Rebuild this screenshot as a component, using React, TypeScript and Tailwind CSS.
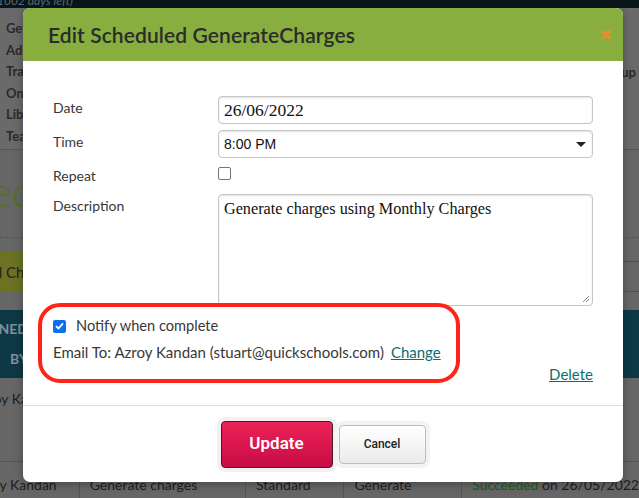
import React from 'react';

const menuLeft = ['Getting Started', 'Admin', 'Transcripts', 'Online Forms', 'Library', 'Teachers'];

function Background() {
    return (
        <div className="w-[639px] h-[498px] bg-[#666666] flex flex-col font-['Lato',sans-serif]">
            {/* top bar */}
            <div className="h-[8px] bg-[#08161c] overflow-hidden">
                <div className="text-[12px] leading-[12px] text-[#5d6c72] italic -translate-y-[5px] -ml-[6px]">(1002 days left)</div>
            </div>

            {/* menu */}
            <div className="h-[142px] bg-[#6a6a6a] border-b border-[#555] flex justify-between pt-[10px]">
                <div className="flex flex-col pl-[6px]">
                    {menuLeft.map((m) => (
                        <div key={m} className="h-[21.6px] leading-[21.6px] text-[13px] font-bold text-[#2a2a2a] whitespace-nowrap">
                            {m}
                        </div>
                    ))}
                </div>
                <div className="flex flex-col pr-[3px] pt-[43px]">
                    <div className="h-[22px] leading-[22px] text-[13px] font-bold text-[#2a2a2a]">Setup</div>
                </div>
            </div>

            {/* logo strip */}
            <div className="h-[88px] border-b border-dashed border-[#555] overflow-hidden">
                <div className="-ml-[10px] mt-[16px] text-[42px] leading-[50px] font-light text-[#55711f]">ed</div>
            </div>

            {/* buttons / header lines */}
            <div className="h-[72px] flex justify-between">
                <div className="mt-[14px] h-[40px] w-[100px] -ml-[20px] pl-[5px] bg-[#6b7322] flex items-center text-[15px] text-[#222] whitespace-nowrap overflow-hidden">
                    All Charges
                </div>
                <div className="w-[16px] mt-[23px] h-[31px] border-y border-[#505050]" />
            </div>

            {/* table header */}
            <div className="h-[68px] bg-[#0d3946] flex items-center">
                <div className="-ml-[52px] w-[80px] text-right text-[14px] font-bold leading-[30px] text-[#7f9199]">
                    ASSIGNED
                    <br />
                    BY
                </div>
            </div>

            {/* row */}
            <div className="h-[84px] border-b border-[#555] pt-[10px]">
                <div className="-ml-[27px] text-[14px] text-[#1d1d1d]">Azroy Kandan</div>
            </div>

            {/* last row */}
            <div className="flex-1 flex text-[14px] text-[#1d1d1d] whitespace-nowrap">
                <div className="w-[82px] border-r border-[#555] overflow-hidden flex justify-end pt-[12px]">
                    <span className="pr-[22px]">Azroy Kandan</span>
                </div>
                <div className="w-[171px] border-r border-[#555] pl-[10px] pt-[12px]">Generate charges</div>
                <div className="w-[101px] border-r border-[#555] pl-[10px] pt-[12px]">Standard</div>
                <div className="w-[121px] border-r border-[#555] pl-[10px] pt-[12px]">Generate</div>
                <div className="pl-[10px] pt-[12px]">
                    <span className="text-[#1c5a1c]">Succeeded</span> on 26/05/2022
                </div>
            </div>
        </div>
    );
}

function Row({ label, children, className }: { label: string; children: React.ReactNode; className?: string }) {
    return (
        <div className={'flex items-start leading-[20px] ' + (className ?? '')}>
            <div className="w-[165px] shrink-0 pt-[2px] text-[14px] text-[#383838]">{label}</div>
            <div className="flex-1">{children}</div>
        </div>
    );
}

export default function App() {
    return (
        <div className="relative w-[639px] h-[498px] overflow-hidden">
            <Background />

            {/* modal */}
            <div className="absolute left-[23px] top-[8px] w-[600px] h-[474px] bg-white rounded-[7px] flex flex-col overflow-hidden font-['Lato',sans-serif] shadow-[0_2px_10px_rgba(0,0,0,0.3)]">
                <div className="h-[53px] shrink-0 bg-[#87ae3e] flex items-center justify-between pl-[25px] pr-[12px]">
                    <h2 className="text-[21px] font-semibold text-[#2b2b2b] tracking-[0.1px]">Edit Scheduled GenerateCharges</h2>
                    <svg width="10" height="10" viewBox="0 0 10 10" className="mt-[1px]">
                        <path d="M1.5 1.5 L8.5 8.5 M8.5 1.5 L1.5 8.5" stroke="#f28b2b" strokeWidth="2.6" strokeLinecap="round" />
                    </svg>
                </div>

                <div className="flex-1 relative px-[30px] pt-[35px]">
                    <Row label="Date">
                        <div className="h-[28px] border border-[#c6c6c6] rounded-[4px] shadow-[inset_0_1px_2px_rgba(0,0,0,0.12)] flex items-center pl-[5px] font-['Liberation_Serif',serif] text-[17.5px] text-[#111]">
                            26/06/2022
                        </div>
                    </Row>

                    <Row label="Time" className="mt-[6px]">
                        <div className="h-[28px] border border-[#c6c6c6] rounded-[4px] shadow-[inset_0_1px_2px_rgba(0,0,0,0.12)] flex items-center justify-between pl-[5px] pr-[6px] font-['Liberation_Sans',sans-serif] text-[14px] text-[#111]">
                            <span>8:00 PM</span>
                            <svg width="10" height="5" viewBox="0 0 10 5">
                                <path d="M0 0 H10 L5 5 Z" fill="#222" />
                            </svg>
                        </div>
                    </Row>

                    <Row label="Repeat" className="mt-[6px]">
                        <div className="pt-[3px]">
                            <div className="w-[13px] h-[13px] border border-[#767676] rounded-[2px] bg-white" />
                        </div>
                    </Row>

                    <Row label="Description" className="mt-[8px]">
                        <div className="h-[112px] border border-[#c6c6c6] rounded-[4px] shadow-[inset_0_1px_2px_rgba(0,0,0,0.12)] relative pl-[5px] pt-[4px] font-['Liberation_Serif',serif] text-[16.2px] text-[#111]">
                            Generate charges using Monthly Charges
                            <svg className="absolute right-[2px] bottom-[2px]" width="8" height="8" viewBox="0 0 8 8">
                                <path d="M7 1 L1 7 M7 4 L4 7" stroke="#888" strokeWidth="1" />
                            </svg>
                        </div>
                    </Row>

                    <div className="mt-[10px] flex items-center h-[20px] text-[14.6px] text-[#383838]">
                        <div className="w-[13px] h-[13px] rounded-[2px] bg-[#0d6ef4] flex items-center justify-center">
                            <svg width="9" height="8" viewBox="0 0 9 8">
                                <path d="M1 4.2 L3.4 6.5 L8 1.3" stroke="white" strokeWidth="1.8" fill="none" />
                            </svg>
                        </div>
                        <span className="ml-[10px]">Notify when complete</span>
                    </div>

                    <div className="mt-[6px] h-[20px] leading-[20px] text-[15px] text-[#383838] whitespace-nowrap">
                        Email To: Azroy Kandan (stuart@quickschools.com)
                        <a className="ml-[7px] text-[#0e6e6c] underline">Change</a>
                    </div>

                    <div className="mt-[2px] h-[20px] leading-[20px] text-[15px] text-right">
                        <a className="text-[#0e6e6c] underline">Delete</a>
                    </div>

                    {/* highlight annotation */}
                    <div className="absolute left-[15px] top-[242px] w-[422px] h-[80px] border-[4px] border-[#ff2418] rounded-[22px]" />
                </div>

                <div className="h-[77px] shrink-0 border-t border-[#dcdcdc] flex items-center justify-center gap-[6px] font-['Roboto',sans-serif]">
                    <button className="w-[112px] h-[47px] rounded-[4px] border border-[#4a1b27] bg-gradient-to-b from-[#ec2157] to-[#c80b45] text-white text-[17px] font-semibold shadow-[0_0_0_4px_#f1f1f1]">
                        Update
                    </button>
                    <button className="w-[87px] h-[39px] rounded-[4px] border border-[#bdbdbd] bg-gradient-to-b from-white to-[#ebebeb] text-[#222] text-[12px] font-medium shadow-[0_0_0_4px_#f3f3f3]">
                        Cancel
                    </button>
                </div>
            </div>
        </div>
    );
}
